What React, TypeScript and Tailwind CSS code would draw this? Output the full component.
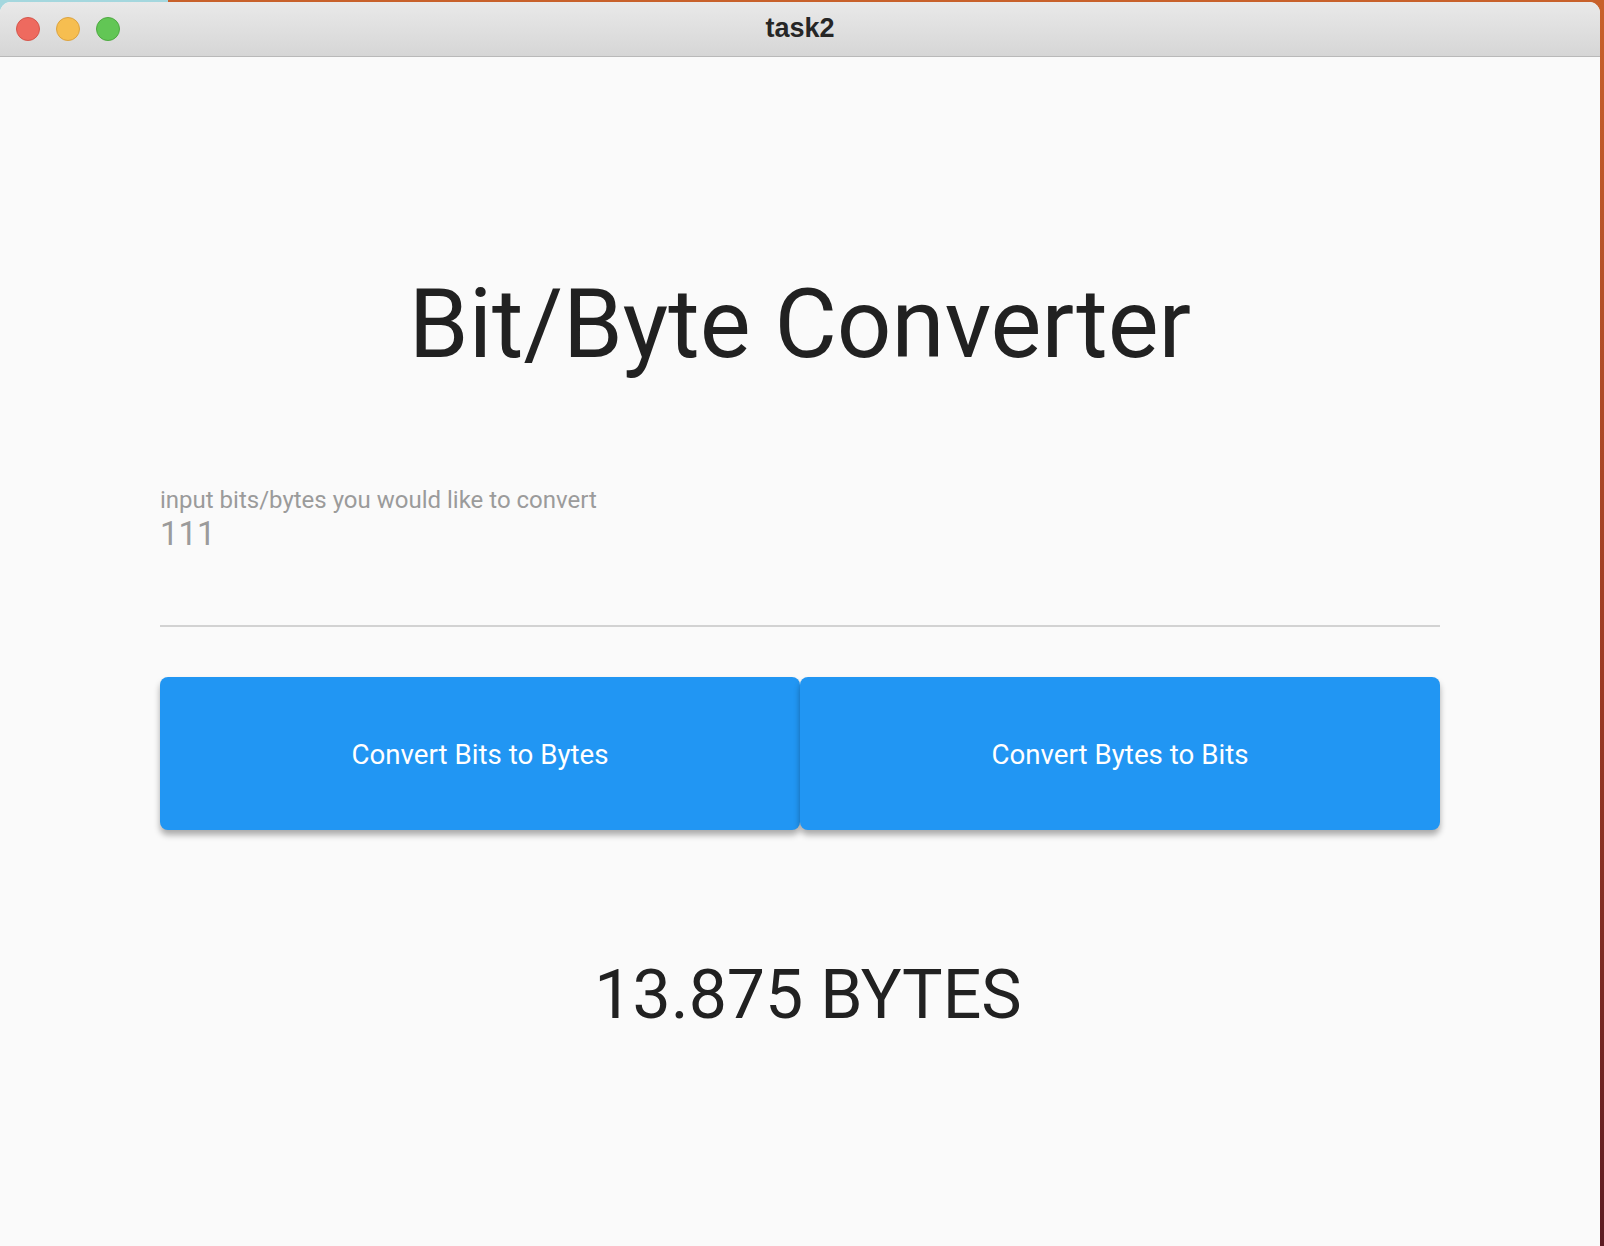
const buttons = ["Convert Bits to Bytes", "Convert Bytes to Bits"];

function TrafficLights() {
  return (
    <div className="flex items-center gap-4 pl-4">
      <span className="w-6 h-6 rounded-full bg-[#ee6a5f] border border-[#d5564b]" />
      <span className="w-6 h-6 rounded-full bg-[#f6be50] border border-[#dca33f]" />
      <span className="w-6 h-6 rounded-full bg-[#62c655] border border-[#4ea941]" />
    </div>
  );
}

export default function App() {
  return (
    <div className="w-[1604px] h-[1246px] overflow-hidden flex flex-col bg-[linear-gradient(to_right,#a4d7de_168px,#c8612b_168px)]">
      <div className="h-[2px] shrink-0" />
      <div className="flex flex-1 min-h-0">
        <div className="w-[1600px] flex flex-col rounded-t-[11px] overflow-hidden bg-[#fafafa]">
          <div className="relative h-[55px] shrink-0 flex items-center border-b border-[#b9b9b9] bg-[linear-gradient(to_bottom,#e9e9e9,#d6d6d6)]">
            <TrafficLights />
            <div className="absolute inset-0 flex items-center justify-center pb-[1px] text-[27px] font-bold text-[#262626] font-['Liberation_Sans',sans-serif]">
              task2
            </div>
          </div>

          <div className="flex-1 flex flex-col px-[160px] font-['Roboto',sans-serif]">
            <h1 className="mt-[219px] text-center text-[96px] leading-[96px] text-[#212121]">
              Bit/Byte Converter
            </h1>

            <div className="mt-[116px] text-[24px] leading-[24px] text-[#9b9b9b]">
              input bits/bytes you would like to convert
            </div>
            <div className="mt-[5px] text-[33px] leading-[33px] text-[#9b9b9b]">111</div>
            <div className="mt-[75px] h-[2px] bg-[#d2d2d2]" />

            <div className="mt-[50px] flex">
              {buttons.map((label) => (
                <button
                  key={label}
                  className="flex-1 h-[153px] rounded-[8px] bg-[#2196f3] text-white text-[27.7px] pt-[3px] shadow-[0_5px_6px_rgba(0,0,0,0.32)]"
                >
                  {label}
                </button>
              ))}
            </div>

            <div className="mt-[131px] pl-4 text-center text-[68px] leading-[68px] text-[#212121]">
              13.875 BYTES
            </div>
          </div>
        </div>
        <div className="w-[4px] bg-[linear-gradient(to_bottom,#c8612b,#9b3a24_55%,#5c1b22)]" />
      </div>
    </div>
  );
}
